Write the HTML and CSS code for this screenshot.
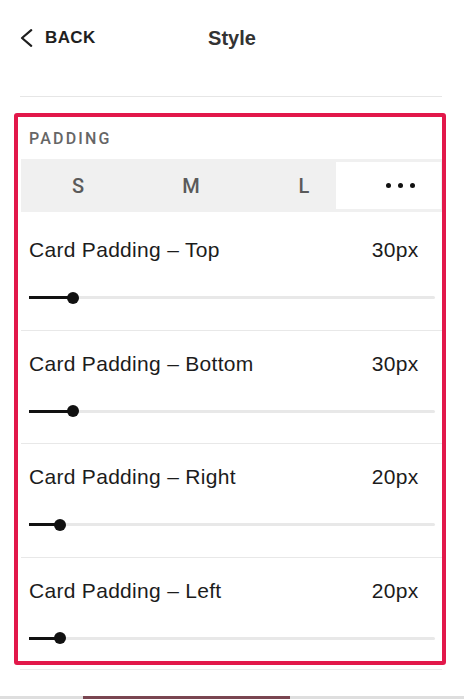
FILE: index.html
```html
<!DOCTYPE html>
<html>
<head>
<meta charset="utf-8">
<link rel="stylesheet" href="styles.css">
</head>
<body>
<header class="topbar">
  <div class="back">
    <svg class="chev" width="13" height="18" viewBox="0 0 13 18"><polyline points="11.2,1.2 2,9 11.2,16.8" fill="none" stroke="#1f1f1f" stroke-width="2.2" stroke-linecap="round" stroke-linejoin="round"/></svg>
    <span class="back-text">BACK</span>
  </div>
  <div class="title">Style</div>
  <div></div>
</header>
<div class="divider"></div>

<section class="panel">
  <div class="section-label">PADDING</div>
  <div class="segmented">
    <div class="seg seg-s">S</div>
    <div class="seg seg-m">M</div>
    <div class="seg seg-l">L</div>
    <div class="seg seg-more"><span class="dots"><i></i><i></i><i></i></span></div>
  </div>

  <div class="row row-first">
    <div class="row-head"><span>Card Padding – Top</span><span>30px</span></div>
    <div class="slider"><div class="fill" style="width:44px"></div><div class="thumb" style="left:44px"></div></div>
  </div>
  <div class="row">
    <div class="row-head"><span>Card Padding – Bottom</span><span>30px</span></div>
    <div class="slider"><div class="fill" style="width:44px"></div><div class="thumb" style="left:44px"></div></div>
  </div>
  <div class="row">
    <div class="row-head"><span>Card Padding – Right</span><span>20px</span></div>
    <div class="slider"><div class="fill" style="width:31px"></div><div class="thumb" style="left:31px"></div></div>
  </div>
  <div class="row row-last">
    <div class="row-head"><span>Card Padding – Left</span><span>20px</span></div>
    <div class="slider"><div class="fill" style="width:31px"></div><div class="thumb" style="left:31px"></div></div>
  </div>
</section>
<div class="divider divider-after"></div>
<div class="bottom-strip"><span class="strip-a"></span><span class="strip-b"></span><span class="strip-c"></span></div>
</body>
</html>
```

FILE: styles.css
```css
html, body {
  margin: 0;
  padding: 0;
  background: #ffffff;
}
body {
  font-family: "Liberation Sans", Arial, sans-serif;
  color: #1a1a1a;
  width: 464px;
  height: 700px;
  overflow: hidden;
}
.topbar {
  display: grid;
  grid-template-columns: 1fr auto 1fr;
  align-items: center;
  height: 76px;
}
.back {
  display: flex;
  align-items: center;
  padding-left: 20px;
  gap: 12px;
}
.chev {
  display: block;
}
.back-text {
  font-size: 17px;
  font-weight: bold;
  color: #1f1f1f;
  letter-spacing: 0.4px;
}
.title {
  font-size: 20px;
  font-weight: bold;
  color: #333333;
}
.divider {
  height: 1px;
  background: #e6e6e6;
  margin: 20px 22px 0 20px;
}
.divider-after {
  margin-top: 4px;
  background: #ececec;
}
.panel {
  margin: 16px 18px 0 14px;
  border: 4px solid #e2184a;
  border-radius: 3px;
}
.section-label {
  font-family: Roboto, "Liberation Sans", sans-serif;
  font-weight: 500;
  font-size: 16px;
  line-height: 20px;
  letter-spacing: 2.2px;
  color: #666666;
  padding: 12px 0 0 11px;
}
.segmented {
  display: flex;
  height: 53px;
  margin: 10px 0 5px 3px;
  background: #f0f0f0;
}
.seg {
  display: flex;
  align-items: center;
  justify-content: center;
  font-family: Roboto, "Liberation Sans", sans-serif;
  font-weight: 500;
  font-size: 20px;
  color: #5a5a5a;
}
.seg-s { width: 114px; }
.seg-m { width: 112px; }
.seg-l { width: 89px; padding-left: 25px; box-sizing: border-box; }
.seg-more {
  flex: 1;
  margin: 3px 1px 3px 0;
  background: #ffffff;
  padding-left: 23px;
}
.dots {
  display: flex;
  gap: 7px;
}
.dots i {
  display: block;
  width: 5px;
  height: 5px;
  border-radius: 50%;
  background: #111111;
}
.row {
  margin-left: 3px;
  padding: 20px 0 25.5px 8px;
  border-top: 1px solid #e8e8e8;
}
.row-first {
  border-top: none;
  padding-top: 20px;
}
.row-last {
  padding-bottom: 16.5px;
}
.row-head {
  display: flex;
  justify-content: space-between;
  font-size: 21px;
  line-height: 26px;
  letter-spacing: 0.3px;
  color: #1c1c1c;
  padding-right: 23.5px;
}
.slider {
  position: relative;
  height: 13px;
  margin: 28px 7px 0 0;
}
.slider::before {
  content: "";
  position: absolute;
  left: 0;
  right: 0;
  top: 5px;
  height: 3px;
  border-radius: 2px;
  background: #e8e8e8;
}
.fill {
  position: absolute;
  left: 0;
  top: 5px;
  height: 3px;
  background: #111111;
}
.thumb {
  position: absolute;
  top: 0.5px;
  width: 12px;
  height: 12px;
  margin-left: -6px;
  border-radius: 50%;
  background: #111111;
}
.bottom-strip {
  display: flex;
  height: 3px;
  margin-top: 26px;
  background: #dedede;
}
.strip-a { width: 83px; }
.strip-b { width: 207px; background: #7a4651; }
.strip-c { flex: 1; }
```
